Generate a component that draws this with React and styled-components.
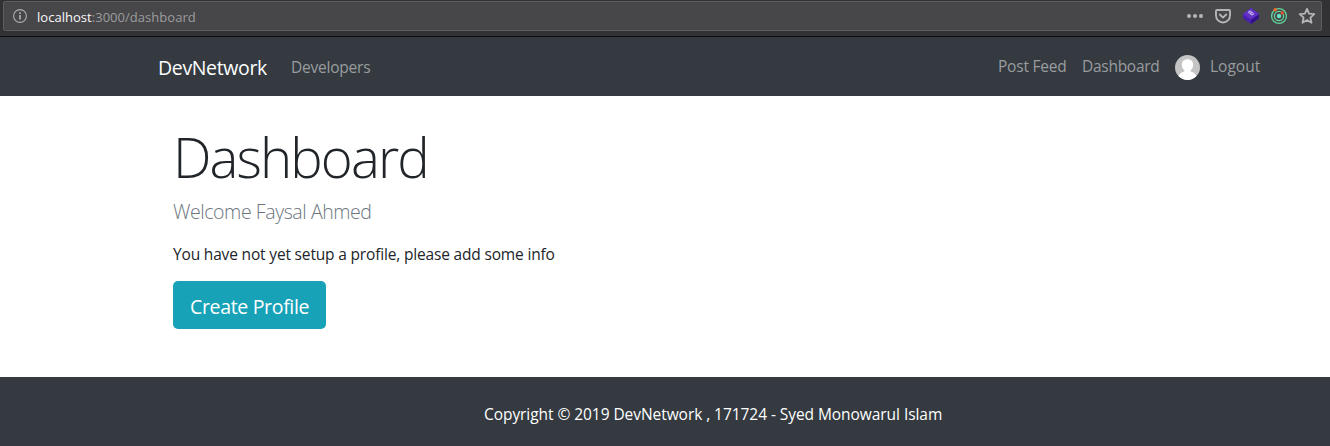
import React from 'react';
import styled, { createGlobalStyle } from 'styled-components';

const GlobalStyle = createGlobalStyle`
  * { box-sizing: border-box; }
  body {
    margin: 0;
    background: #fff;
    color: #212529;
    font-family: "Segoe UI", "Open Sans", "Noto Sans", sans-serif;
    font-size: 16px;
    line-height: 24px;
    overflow: hidden;
  }
`;

const Page = styled.div`
  display: flex;
  flex-direction: column;
  height: 446px;
`;

const BrowserBar = styled.div`
  height: 37px;
  padding: 1px 8px 0 3px;
  background: #323234;
  border-bottom: 1px solid #0c0c0d;
`;

const AddressField = styled.div`
  display: flex;
  align-items: center;
  height: 30px;
  padding: 0 5px 0 8px;
  background: #474749;
  border: 1px solid #5c5c5e;
  border-radius: 2px;
`;

const Url = styled.span`
  margin: 1px 0 0 9px;
  color: #9c9c9e;
  font-size: 13px;
  letter-spacing: 0.03px;
  line-height: 20px;
  white-space: nowrap;
`;

const Host = styled.span`
  color: #f9f9fa;
`;

const BarActions = styled.div`
  display: flex;
  align-items: center;
  gap: 10px;
  margin-left: auto;

  svg { display: block; }
`;

const Navbar = styled.nav`
  display: flex;
  align-items: center;
  height: 59px;
  padding: 2px 70px 0 158px;
  background: #343a40;
  white-space: nowrap;
`;

const Brand = styled.a`
  width: 109px;
  color: #fff;
  font-size: 19.5px;
  letter-spacing: -0.36px;
  line-height: 30px;
`;

const NavLink = styled.a`
  width: ${(p) => p.$width}px;
  color: #999c9f;
  font-size: 15.5px;
  letter-spacing: ${(p) => p.$track || 0}px;
`;

const NavStart = styled.div`
  margin: -1px 0 0 24px;
`;

const NavEnd = styled.div`
  display: flex;
  gap: 16px;
  margin: -2px 0 0 auto;
`;

const Account = styled.div`
  display: flex;
  gap: 10px;

  svg { display: block; margin-top: 1px; }
`;

const Main = styled.main`
  height: 281px;
  padding: 24px 173px 0;
  white-space: nowrap;
`;

const Title = styled.h1`
  margin: 0 0 6px;
  font-size: 54.5px;
  font-weight: 300;
  letter-spacing: -1.9px;
  line-height: 67px;
  padding-top: 4px;
`;

const Lead = styled.p`
  margin: 0 0 15px;
  color: #6c757d;
  font-size: 19.5px;
  font-weight: 300;
  letter-spacing: -0.42px;
  line-height: 30px;
`;

const Note = styled.p`
  margin: 0 0 15px;
  font-size: 15.5px;
  letter-spacing: -0.17px;
`;

const CreateButton = styled.button`
  display: block;
  width: 153px;
  height: 48px;
  padding: 4px 0 0 17px;
  border: 0;
  border-radius: 5px;
  background: #17a2b8;
  color: #fff;
  font: inherit;
  font-size: 19.5px;
  letter-spacing: -0.33px;
  line-height: 30px;
  text-align: left;
`;

const Footer = styled.footer`
  flex: 1;
  padding: 25px 0 0 484px;
  background: #343a40;
  color: #fff;
  font-size: 15.5px;
  letter-spacing: -0.06px;
  white-space: nowrap;
`;

const InfoIcon = () => (
  <svg width="16" height="16" viewBox="0 0 16 16" fill="none" stroke="#adadae" strokeWidth="1.1">
    <circle cx="8" cy="8" r="6.4" />
    <path d="M8 7v4.5M8 4.2v1.7" strokeWidth="1.7" />
  </svg>
);

const MoreIcon = () => (
  <svg width="18" height="18" viewBox="0 0 18 18" fill="#b5b5b7">
    <circle cx="3" cy="9" r="2" />
    <circle cx="9" cy="9" r="2" />
    <circle cx="15" cy="9" r="2" />
  </svg>
);

const PocketIcon = () => (
  <svg width="18" height="18" viewBox="0 0 18 18" fill="none" stroke="#b5b5b7" strokeWidth="1.9" strokeLinecap="round" strokeLinejoin="round">
    <path d="M3.1 3h11.8q1.1 0 1.1 1.1v4.4a7 7 0 0 1-14 0V4.1Q2 3 3.1 3z" />
    <path d="M5.8 7.5L9 10.6l3.2-3.1" />
  </svg>
);

const CubeIcon = () => (
  <svg width="18" height="18" viewBox="0 0 18 18">
    <path d="M9 1l8 6v4.3L9 17l-8-5.7V7z" fill="#4a20ae" />
    <path d="M9 12.4L17 7v4.3L9 17z" fill="#35118c" />
    <path d="M9 1l8 6-8 5.4L1 7z" fill="#6232c4" />
    <g fill="none" stroke="#d8c9f5" strokeWidth="0.9">
      <ellipse cx="8" cy="5.2" rx="1.5" ry="1.1" />
      <ellipse cx="10" cy="6.8" rx="1.5" ry="1.1" />
    </g>
  </svg>
);

const OrbitIcon = () => (
  <svg width="18" height="18" viewBox="0 0 18 18">
    <g fill="none" stroke="#62d49b" strokeWidth="1.3">
      <circle cx="9" cy="9" r="7.4" />
      <circle cx="9" cy="9" r="4.6" />
    </g>
    <circle cx="9" cy="9" r="2.2" fill="#66e0c0" />
    <circle cx="5.2" cy="2.8" r="1.7" fill="#f46a2c" />
    <circle cx="12.3" cy="5.9" r="1.6" fill="#f0512b" />
  </svg>
);

const StarIcon = () => (
  <svg width="18" height="18" viewBox="0 0 18 18" fill="none" stroke="#b5b5b7" strokeWidth="1.8" strokeLinejoin="round">
    <path d="M9 1.8l2.1 4.8 5.2.5-3.9 3.5 1.1 5.2L9 13.1l-4.5 2.7 1.1-5.2L1.7 7.1l5.2-.5z" />
  </svg>
);

const Avatar = () => (
  <svg width="25" height="25" viewBox="0 0 25 25">
    <defs>
      <clipPath id="avatar-round"><circle cx="12.5" cy="12.5" r="12.5" /></clipPath>
    </defs>
    <g clipPath="url(#avatar-round)">
      <rect width="25" height="25" fill="#c4c4c4" />
      <path d="M12.5 4.2c3.6 0 5.7 2.3 5.7 5.6 0 2.5-1.1 4.4-2.6 5.4v1.2c3.2.8 5.5 2.7 6.1 5.4V25H3.3v-3.2c.6-2.7 2.9-4.6 6.1-5.4v-1.2c-1.5-1-2.6-2.9-2.6-5.4 0-3.3 2.1-5.6 5.7-5.6z" fill="#fff" />
    </g>
  </svg>
);

export default function App() {
  return (
    <Page>
      <GlobalStyle />
      <BrowserBar>
        <AddressField>
          <InfoIcon />
          <Url><Host>localhost</Host>:3000/dashboard</Url>
          <BarActions>
            <MoreIcon />
            <PocketIcon />
            <CubeIcon />
            <OrbitIcon />
            <StarIcon />
          </BarActions>
        </AddressField>
      </BrowserBar>
      <Navbar>
        <Brand>DevNetwork</Brand>
        <NavStart>
          <NavLink $track={-0.22}>Developers</NavLink>
        </NavStart>
        <NavEnd>
          <NavLink $width={68} $track={-0.22}>Post Feed</NavLink>
          <NavLink $width={77} $track={-0.28}>Dashboard</NavLink>
          <Account>
            <Avatar />
            <NavLink $width={50}>Logout</NavLink>
          </Account>
        </NavEnd>
      </Navbar>
      <Main>
        <Title>Dashboard</Title>
        <Lead>Welcome Faysal Ahmed</Lead>
        <Note>You have not yet setup a profile, please add some info</Note>
        <CreateButton>Create Profile</CreateButton>
      </Main>
      <Footer>Copyright © 2019 DevNetwork , 171724 - Syed Monowarul Islam</Footer>
    </Page>
  );
}
